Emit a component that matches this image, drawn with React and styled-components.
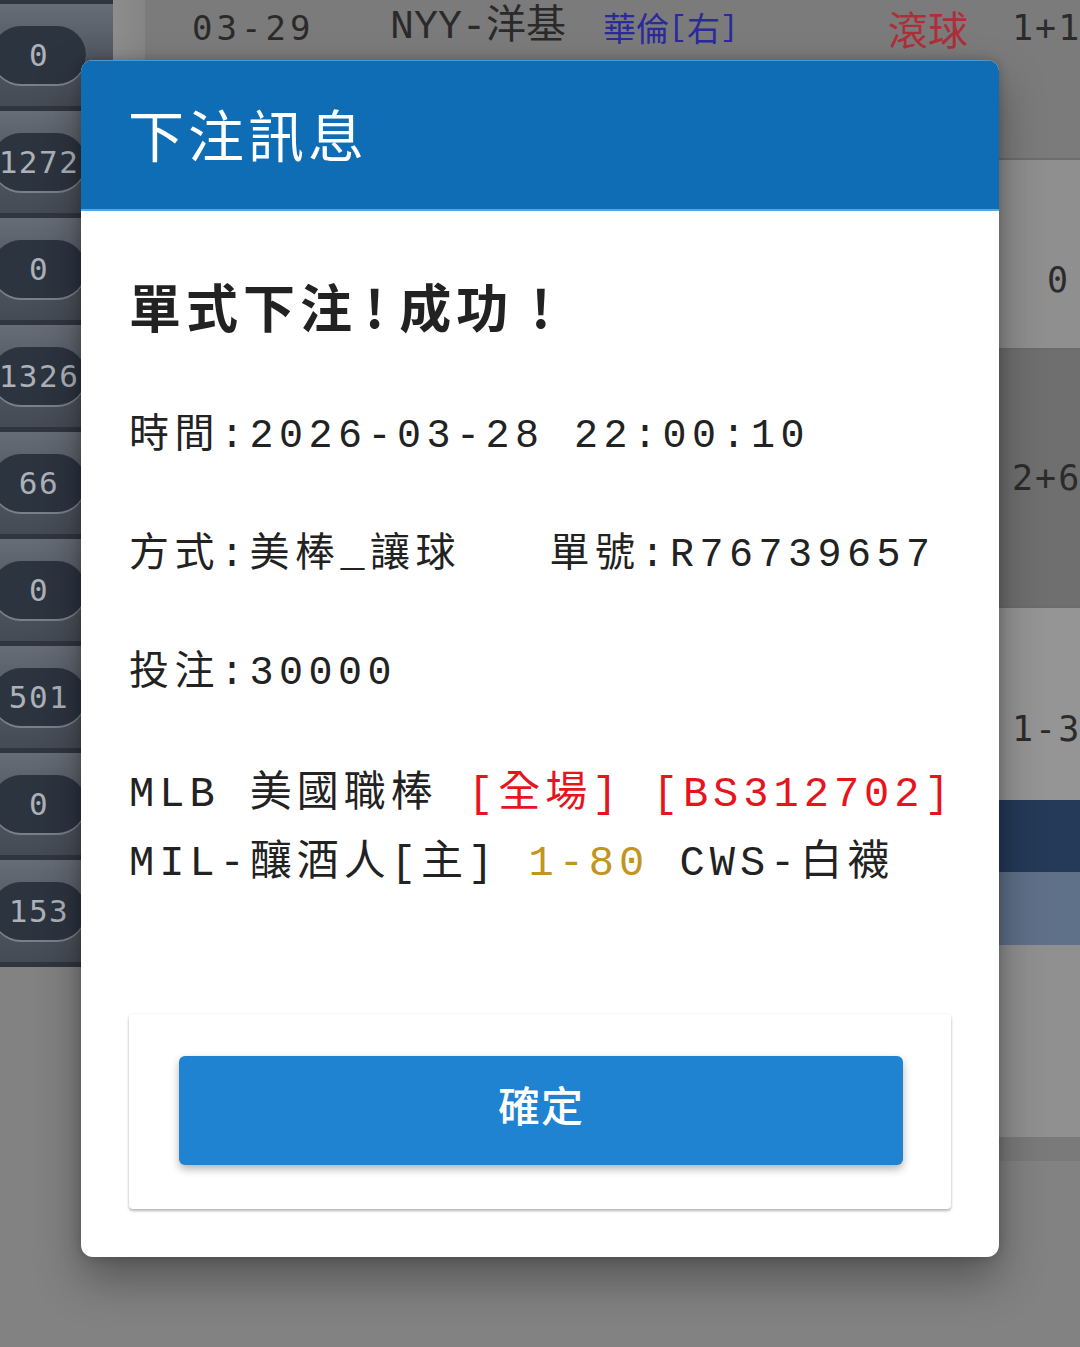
import React from "react";
import styled, { createGlobalStyle } from "styled-components";

const Global = createGlobalStyle`
  html, body { margin: 0; padding: 0; }
  body {
    width: 1080px;
    height: 1347px;
    overflow: hidden;
    background: #828282;
    font-family: "Noto Sans CJK TC", sans-serif;
  }
  #root { width: 1080px; height: 1347px; }
`;

const MONO = `"Liberation Mono", "Courier New", Cousine, "DejaVu Sans Mono", "Noto Sans CJK TC", monospace`;
const SANSMONO = `"DejaVu Sans Mono", "Noto Sans CJK TC", monospace`;

/* ---------- background page ---------- */
const Page = styled.div`
  position: relative;
  display: flex;
  width: 1080px;
  height: 1347px;
  overflow: hidden;
  background: #828282;
`;

const Sidebar = styled.div`
  width: 113px;
  flex: none;
  align-self: flex-start;
  display: flex;
  flex-direction: column;
  border-top: 4px solid #30363f;
`;

const SideRow = styled.div`
  height: 102px;
  border-bottom: 5px solid #30363f;
  background: linear-gradient(180deg, #666d77 0%, #4f5660 55%, #444b55 100%);
  display: flex;
  align-items: center;
  overflow: hidden;
`;

const Pill = styled.div`
  flex: none;
  margin-left: -8px;
  width: 94px;
  height: 58px;
  border-radius: 29px;
  background: #2c3440;
  box-shadow: 0 2px 0 #7a8089;
  display: flex;
  align-items: center;
  justify-content: center;
  font-family: ${SANSMONO};
  font-size: 31px;
  letter-spacing: 1.5px;
  color: #aeb2b8;
  white-space: nowrap;
`;

const Main = styled.div`
  flex: 1;
  display: flex;
  flex-direction: column;
`;

const TopRow = styled.div`
  height: 158px;
  flex: none;
  display: flex;
  align-items: flex-start;
  background: #7b7b7b;
  border-bottom: 2px solid #6d6d6d;
`;

const Strip = styled.div`
  width: 32px;
  height: 100%;
  flex: none;
  background: linear-gradient(90deg, #8d8d8d, #858585);
`;

const TopCell = styled.div`
  width: ${(p) => p.w}px;
  flex: none;
  box-sizing: border-box;
  padding-left: ${(p) => p.pad || 0}px;
  height: 56px;
  line-height: 1.2;
  display: flex;
  align-items: center;
  white-space: pre;
  color: ${(p) => p.c || "#2a2a2a"};
  font-family: ${(p) => (p.mono ? MONO : p.smono ? SANSMONO : `"Noto Sans CJK TC", sans-serif`)};
  font-size: ${(p) => p.fs}px;
  letter-spacing: ${(p) => p.ls || 0}px;
`;

const Bracket = styled.span`
  font-family: ${MONO};
  font-size: 30px;
`;

const TRow = styled.div`
  height: ${(p) => p.h}px;
  flex: none;
  background: ${(p) => p.bg};
  border-bottom: ${(p) => (p.line ? "2px solid #6c6c6c" : "none")};
  display: flex;
  justify-content: flex-end;
`;

const ScoreCell = styled.div`
  width: 82px;
  height: ${(p) => (p.h ? `${p.h}px` : "auto")};
  line-height: 1.2;
  box-sizing: border-box;
  padding-left: ${(p) => p.indent || 14}px;
  padding-top: ${(p) => p.dy || 0}px;
  display: flex;
  align-items: center;
  font-family: ${SANSMONO};
  font-size: 35px;
  letter-spacing: 2px;
  color: #2b2b2b;
  white-space: nowrap;
`;

/* ---------- modal ---------- */
const Overlay = styled.div`
  position: absolute;
  inset: 0;
  display: flex;
  justify-content: center;
  align-items: flex-start;
  padding-top: 60px;
  box-sizing: border-box;
`;

const Dialog = styled.div`
  width: 918px;
  background: #fff;
  border-radius: 12px;
  overflow: hidden;
  box-shadow: 0 22px 45px rgba(0, 0, 0, 0.35), 0 0 12px rgba(0, 0, 0, 0.2);
`;

const Header = styled.div`
  height: 144px;
  background: #0f6db6;
  border-top: 1px solid #4a97d2;
  border-bottom: 2px solid #5aa5dd;
  display: flex;
  align-items: center;
  padding-left: 47px;
  padding-bottom: 4px;
  box-sizing: content-box;
`;

const HeaderTitle = styled.h2`
  margin: 0;
  font-family: "Noto Sans CJK TC", sans-serif;
  font-weight: 400;
  font-size: 56px;
  letter-spacing: 4px;
  color: #fff;
  line-height: 1;
`;

const Body = styled.div`
  padding: 55px 48px 48px;
`;

const Headline = styled.div`
  font-family: "Noto Sans CJK TC", sans-serif;
  font-size: 52px;
  font-weight: 600;
  letter-spacing: 5px;
  line-height: 80px;
  color: #222;
  margin-bottom: 32px;
  padding-bottom: 0;
  white-space: pre;
`;

const Bang = styled.span`
  padding: 0 10px 0 ${(p) => p.pl || 8}px;
`;

const InfoLine = styled.div`
  font-family: ${MONO};
  font-size: 40px;
  letter-spacing: 5.5px;
  line-height: 118.5px;
  height: 118.5px;
  color: #222;
  white-space: pre;
`;

const GameBlock = styled.div`
  margin-top: 27.5px;
  font-family: ${MONO};
  font-size: 42px;
  letter-spacing: 5px;
  line-height: 69px;
  color: #222;
  white-space: pre;
`;

const Mark = styled.span`
  color: ${(p) => p.c};
`;

const Card = styled.div`
  margin-top: 114.5px;
  height: 195px;
  box-sizing: border-box;
  padding: 42px 48px 44px 50px;
  border-radius: 4px;
  background: #fff;
  box-shadow: 0 2px 3px rgba(0, 0, 0, 0.28), 0 0 2px rgba(0, 0, 0, 0.1);
`;

const ConfirmButton = styled.button`
  display: block;
  width: 100%;
  height: 109px;
  border: none;
  border-radius: 6px;
  background: #1f83d1;
  color: #fff;
  font-family: "Noto Sans CJK TC", sans-serif;
  font-size: 42px;
  font-weight: 500;
  letter-spacing: 1px;
  padding: 0 0 14px;
  box-shadow: 0 4px 8px rgba(0, 0, 0, 0.3);
  cursor: pointer;
`;

const pills = ["0", "1272", "0", "1326", "66", "0", "501", "0", "153"];

export default function App() {
  return (
    <>
      <Global />
      <Page>
        <Sidebar>
          {pills.map((v, i) => (
            <SideRow key={i}>
              <Pill>{v}</Pill>
            </SideRow>
          ))}
        </Sidebar>
        <Main>
          <TopRow>
            <Strip />
            <TopCell w={245} pad={47} smono fs={34} ls={4}>03-29</TopCell>
            <TopCell w={213} mono fs={40}>NYY-洋基</TopCell>
            <TopCell w={285} fs={33} c="#2a2a9c">
              華倫<Bracket>[</Bracket>右<Bracket>]</Bracket>
            </TopCell>
            <TopCell w={110} fs={40} c="#ad2f3a">滾球</TopCell>
            <ScoreCell h={56}>1+1</ScoreCell>
          </TopRow>
          <TRow h={188} bg="#8f8f8f" line>
            <ScoreCell indent={49} dy={52}>0</ScoreCell>
          </TRow>
          <TRow h={256} bg="#6f6f6f" line>
            <ScoreCell dy={-10}>2+6</ScoreCell>
          </TRow>
          <TRow h={192} bg="#959595">
            <ScoreCell dy={50}>1-3</ScoreCell>
          </TRow>
          <TRow h={72} bg="#243a58" />
          <TRow h={73} bg="#5f7089" />
          <TRow h={192} bg="#909090" />
          <TRow h={24} bg="#7a7a7a" />
        </Main>

        <Overlay>
          <Dialog>
            <Header>
              <HeaderTitle>下注訊息</HeaderTitle>
            </Header>
            <Body>
              <Headline>
                單式下注<Bang>!</Bang>成功<Bang pl={18}>!</Bang>
              </Headline>
              <InfoLine>時間:2026-03-28 22:00:10</InfoLine>
              <InfoLine>方式:美棒_讓球   單號:R76739657</InfoLine>
              <InfoLine>投注:30000</InfoLine>
              <GameBlock>
                <div>
                  MLB 美國職棒 <Mark c="#e8141c">[全場]</Mark> <Mark c="#e8141c">[BS312702]</Mark>
                </div>
                <div>
                  MIL-釀酒人[主] <Mark c="#c29420">1-80</Mark> CWS-白襪
                </div>
              </GameBlock>
              <Card>
                <ConfirmButton>確定</ConfirmButton>
              </Card>
            </Body>
          </Dialog>
        </Overlay>
      </Page>
    </>
  );
}
